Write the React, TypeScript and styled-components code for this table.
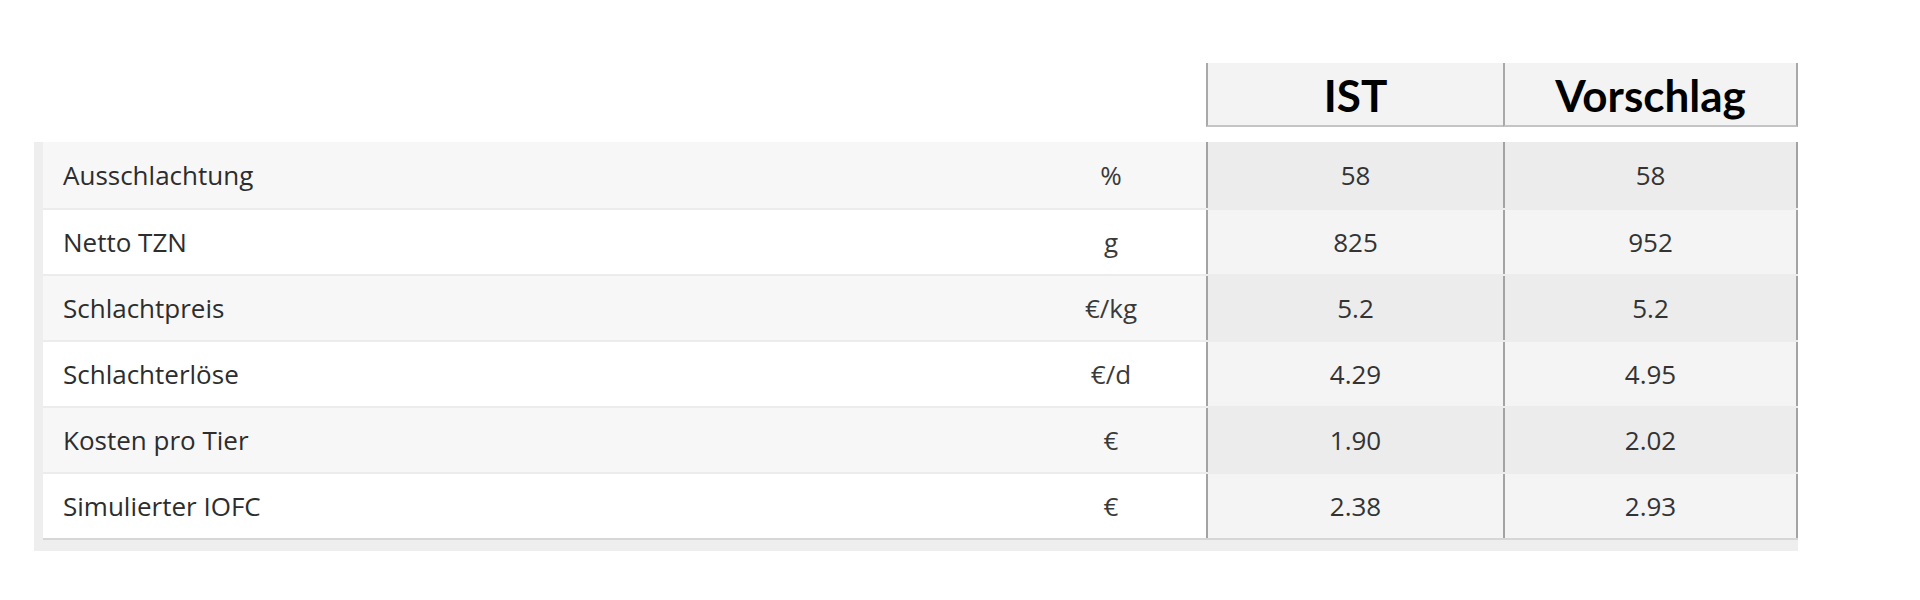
import styled, { createGlobalStyle, css } from "styled-components";

type Row = {
  label: string;
  unit: string;
  ist: string;
  proposal: string;
};

const rows: Row[] = [
  { label: "Ausschlachtung", unit: "%", ist: "58", proposal: "58" },
  { label: "Netto TZN", unit: "g", ist: "825", proposal: "952" },
  { label: "Schlachtpreis", unit: "€/kg", ist: "5.2", proposal: "5.2" },
  { label: "Schlachterlöse", unit: "€/d", ist: "4.29", proposal: "4.95" },
  { label: "Kosten pro Tier", unit: "€", ist: "1.90", proposal: "2.02" },
  { label: "Simulierter IOFC", unit: "€", ist: "2.38", proposal: "2.93" },
];

const COLUMNS = "973px 190px 297px 295px";

const GlobalStyle = createGlobalStyle`
  body {
    margin: 0;
    background: #ffffff;
    font-family: "Open Sans", "Noto Sans", sans-serif;
  }
`;

const Page = styled.div`${() => css`
  display: flex;
  flex-direction: column;
  padding: 63px 0 0 34px;
  width: 1764px;
  box-sizing: content-box;
`}`;

const HeaderRow = styled.div`${() => css`
  display: grid;
  grid-template-columns: ${COLUMNS};
  padding-left: 9px;
  margin-bottom: 15px;
`}`;

const HeaderCell = styled.div<{ $last?: boolean }>`${({ $last }) => css`
  height: 64px;
  box-sizing: border-box;
  display: flex;
  align-items: center;
  justify-content: center;
  background: #f3f3f3;
  border-left: 2px solid #a9a9a9;
  border-bottom: 2px solid #c4c4c4;
  ${$last && "border-right: 2px solid #a9a9a9;"}
  font-family: Lato, "Open Sans", sans-serif;
  font-weight: 700;
  font-size: 44px;
  color: #000000;
  padding-top: 2px;
`}`;

const Card = styled.div`${() => css`
  display: flex;
  flex-direction: column;
  background: #eeeeef;
  padding: 0 0 11px 9px;
`}`;

const Body = styled.div`${() => css`
  display: flex;
  flex-direction: column;
  border-bottom: 2px solid #d6d6d6;
`}`;

const BodyRow = styled.div<{ $shaded: boolean; $first: boolean }>`${({ $shaded, $first }) => css`
  display: grid;
  grid-template-columns: ${COLUMNS};
  height: 66px;
  box-sizing: border-box;
  background: ${$shaded ? "#f7f7f7" : "#ffffff"};
  border-top: ${$first ? "none" : "2px solid #ececec"};
  font-size: 26px;
  color: #2d2d2d;
`}`;

const LabelCell = styled.div`${() => css`
  display: flex;
  align-items: center;
  padding-left: 20px;
`}`;

const UnitCell = styled.div`${() => css`
  display: flex;
  align-items: center;
  justify-content: center;
  color: #3a3a3a;
`}`;

const ValueCell = styled.div<{ $shaded: boolean; $last?: boolean }>`${({ $shaded, $last }) => css`
  display: flex;
  align-items: center;
  justify-content: center;
  box-sizing: border-box;
  background: ${$shaded ? "#ececec" : "#f4f4f4"};
  border-left: 2px solid #a3a3a3;
  ${$last && "border-right: 2px solid #a3a3a3;"}
  color: #333333;
`}`;

const Blank = styled.div``;

export default function App() {
  return (
    <>
      <GlobalStyle />
      <Page>
        <HeaderRow>
          <Blank />
          <Blank />
          <HeaderCell>IST</HeaderCell>
          <HeaderCell $last>Vorschlag</HeaderCell>
        </HeaderRow>
        <Card>
          <Body>
            {rows.map((row, index) => {
              const shaded = index % 2 === 0;
              return (
                <BodyRow key={row.label} $shaded={shaded} $first={index === 0}>
                  <LabelCell>{row.label}</LabelCell>
                  <UnitCell>{row.unit}</UnitCell>
                  <ValueCell $shaded={shaded}>{row.ist}</ValueCell>
                  <ValueCell $shaded={shaded} $last>
                    {row.proposal}
                  </ValueCell>
                </BodyRow>
              );
            })}
          </Body>
        </Card>
      </Page>
    </>
  );
}
